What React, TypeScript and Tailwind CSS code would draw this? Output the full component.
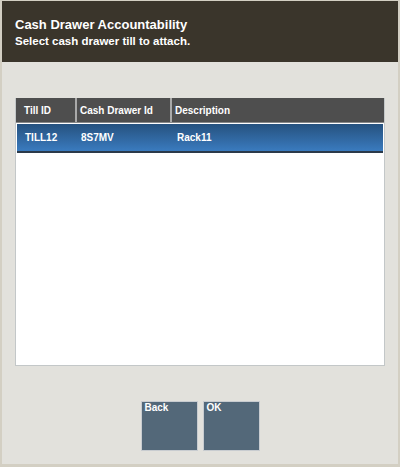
export default function App() {
  const font = { fontFamily: '"Liberation Sans", Arial, sans-serif' }
  return (
    <div className="w-[400px] h-[467px] flex flex-col bg-[#e2e1dc] border-l-2 border-r-2 border-b-[3px] border-t border-[#d3cfc3] overflow-hidden" style={font}>
      {/* Header */}
      <div className="h-[61px] shrink-0 bg-[#3a352b] px-[13px] pt-[16px] text-white font-bold">
        <div className="text-[13px] leading-[16px]">Cash Drawer Accountability</div>
        <div className="text-[11.5px] leading-[16px]">Select cash drawer till to attach.</div>
      </div>

      {/* Table */}
      <div className="mx-[13px] mt-[36px] h-[268px] flex flex-col bg-white border border-[#c3c7c8] border-t-0">
        <div className="h-[25px] shrink-0 flex bg-[#4e4e4e] text-white text-[10px] font-bold border-b border-[#8a8a8a]">
          <div className="w-[61px] flex items-center px-[8px] border-r-2 border-[#a9a9a9]">Till ID</div>
          <div className="w-[95px] flex items-center px-[3px] border-r-2 border-[#a9a9a9]">Cash Drawer Id</div>
          <div className="flex-1 flex items-center px-[3px]">Description</div>
        </div>
        <div className="h-[29px] shrink-0 flex bg-gradient-to-b from-[#26527f] to-[#3a7bbf] text-white text-[10px] font-bold border-b-2 border-[#2b3a4a] mt-[1px] mx-[1px]">
          <div className="w-[60px] flex items-center px-[8px]">TILL12</div>
          <div className="w-[97px] flex items-center px-[4px]">8S7MV</div>
          <div className="flex-1 flex items-center px-[3px]">Rack11</div>
        </div>
        <div className="flex-1" />
      </div>

      {/* Buttons */}
      <div className="flex justify-center gap-[5px] mt-[35px]">
        <button className="w-[57px] h-[50px] bg-[#536879] border border-[#c8ccd0] text-white text-[10px] font-bold text-left px-[3px] leading-[12px] pt-0 flex items-start">Back</button>
        <button className="w-[57px] h-[50px] bg-[#536879] border border-[#c8ccd0] text-white text-[10px] font-bold text-left px-[3px] leading-[12px] pt-0 flex items-start">OK</button>
      </div>
    </div>
  )
}
